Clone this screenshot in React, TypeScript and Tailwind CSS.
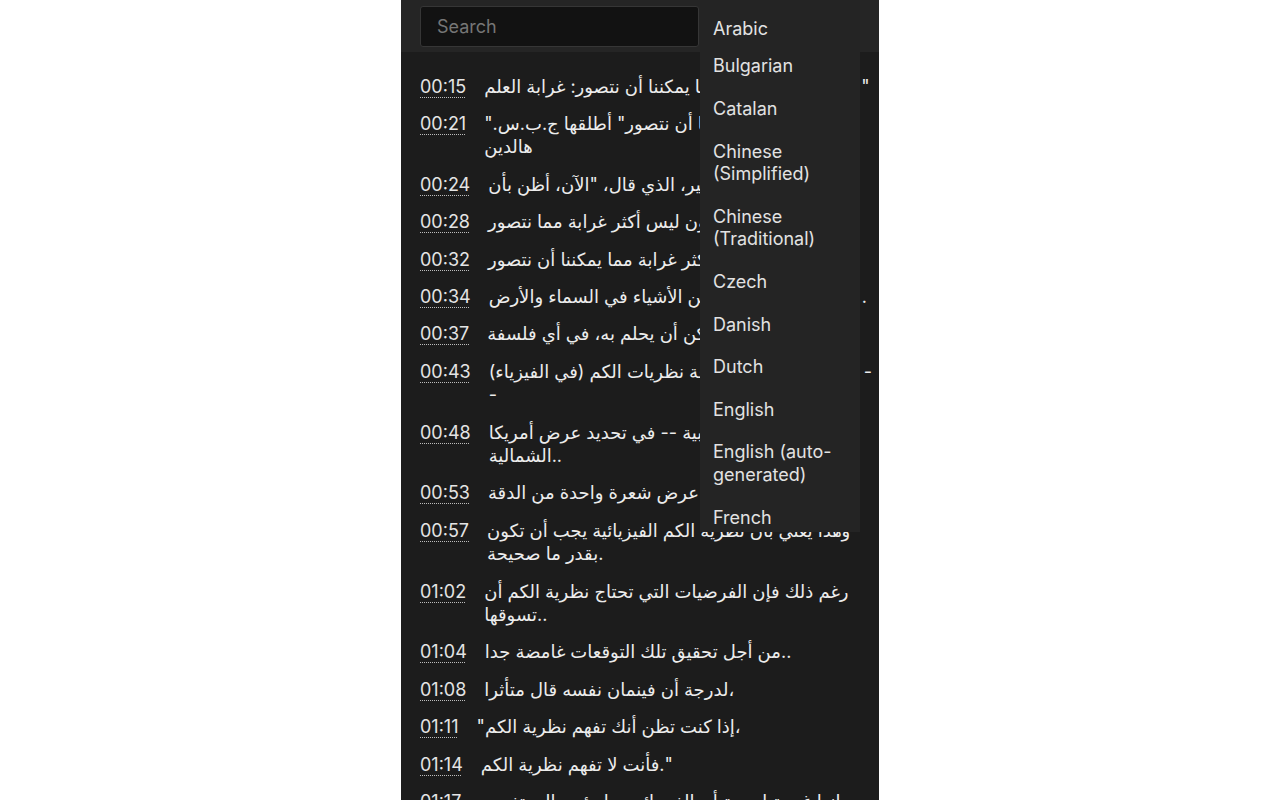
import type { ReactNode } from "react"

const languages = [
  "Bulgarian",
  "Catalan",
  "Chinese (Simplified)",
  "Chinese (Traditional)",
  "Czech",
  "Danish",
  "Dutch",
  "English",
  "English (auto-generated)",
  "French",
  "German",
]

type Cue = { time: string; text: ReactNode }

// an rtl run that runs under the language menu; the box keeps its width fixed
// so the trailing punctuation lands right after the menu
function Run({ width, children }: { width: string; children: string }) {
  return (
    <span className={`inline-block overflow-hidden align-top ${width}`}>
      <span dir="rtl">{children}</span>
    </span>
  )
}

const cues: Cue[] = [
  {
    time: "00:15",
    text: (
      <>
        <Run width="w-[374px]">{'عنوان حديثي: "أغرب مما يمكننا أن نتصور: غرابة العلم'}</Run>
        <span className="pl-[3px]">{'"'}</span>
      </>
    ),
  },
  {
    time: "00:21",
    text: (
      <>
        {'"أغرب مما يمكننا أن نتصور" أطلقها ج.ب.س.\u200F'}
        <br />
        {"هالدين"}
      </>
    ),
  },
  { time: "00:24", text: 'عالم الأحياء الشهير، الذي قال، "الآن، أظن بأن' },
  { time: "00:28", text: "ظني أن الكون ليس أكثر غرابة مما نتصور" },
  { time: "00:32", text: "فحسب، بل أكثر غرابة مما يمكننا أن نتصور" },
  {
    time: "00:34",
    text: (
      <>
        <Run width="w-[367px]">أظن أن هناك المزيد من الأشياء في السماء والأرض</Run>
        <span className="pl-[6px]">.</span>
      </>
    ),
  },
  { time: "00:37", text: "أكثر مما يمكن أن يحلم به، في أي فلسفة" },
  {
    time: "00:43",
    text: (
      <>
        <Run width="w-[367px]">قارن ريتشارد فاينمان دقة نظريات الكم (في الفيزياء)</Run>
        <span className="pl-[8px]">-</span>
        <br />
        {"-"}
      </>
    ),
  },
  {
    time: "00:48",
    text: (
      <>
        {"التنبؤات التجريبية -- في تحديد عرض أمريكا"}
        <br />
        {"الشمالية.."}
      </>
    ),
  },
  { time: "00:53", text: "إلى حد يقدر عرض شعرة واحدة من الدقة" },
  {
    time: "00:57",
    text: (
      <>
        {"وهذا يعني بأن نظرية الكم الفيزيائية يجب أن تكون"}
        <br />
        {"بقدر ما صحيحة."}
      </>
    ),
  },
  {
    time: "01:02",
    text: (
      <>
        {"رغم ذلك فإن الفرضيات التي تحتاج نظرية الكم أن"}
        <br />
        {"تسوقها.."}
      </>
    ),
  },
  { time: "01:04", text: "من أجل تحقيق تلك التوقعات غامضة جدا.." },
  { time: "01:08", text: "لدرجة أن فينمان نفسه قال متأثرا،" },
  { time: "01:11", text: '"إذا كنت تظن أنك تفهم نظرية الكم،' },
  { time: "01:14", text: 'فأنت لا تفهم نظرية الكم."' },
  { time: "01:17", text: "إنها غريبة لدرجة أن الفيزيائيين يلجؤون إلى تفسير" },
]

function LanguageMenu() {
  return (
    <div className="absolute left-[299px] top-0 z-10 h-[532px] w-[160px] overflow-hidden bg-[#242424] text-[18px] leading-[22.6px] text-[#e2e2e2]">
      <div className="pl-[13px] pr-[12px] pt-[17.5px] pb-[5.4px]">Arabic</div>
      {languages.map((lang) => (
        <div key={lang} className="py-[10px] pl-[13px] pr-[12px]">
          {lang}
        </div>
      ))}
    </div>
  )
}

function CueRow({ cue }: { cue: Cue }) {
  return (
    <div className="flex items-start gap-[18px] py-[7px] leading-[23.4px]">
      <span className="shrink-0 text-[#e4e4e4] underline decoration-dotted decoration-[#bdbdbd] decoration-1 underline-offset-[4px]">
        {cue.time}
      </span>
      <p dir="ltr" className="whitespace-nowrap text-left text-[#ececec]">
        {cue.text}
      </p>
    </div>
  )
}

export default function App() {
  return (
    <div
      className="flex min-h-screen justify-center bg-white"
      style={{ fontFamily: 'Inter, "DejaVu Sans", sans-serif' }}
    >
      <div className="relative h-[800px] w-[478px] overflow-hidden bg-[#1c1c1c] text-[18px]">
        <div className="h-[52px] bg-[#252525] pl-[19px] pt-[6px]">
          <input
            placeholder="Search"
            className="h-[41px] w-[279px] rounded-[3px] border border-[#363636] bg-[#121212] pl-[16px] text-[18px] text-[#e0e0e0] outline-none placeholder:text-[#767676]"
          />
        </div>
        <LanguageMenu />
        <div className="pl-[19px] pr-[9px] pt-[15.5px]">
          {cues.map((cue) => (
            <CueRow key={cue.time} cue={cue} />
          ))}
        </div>
      </div>
    </div>
  )
}
